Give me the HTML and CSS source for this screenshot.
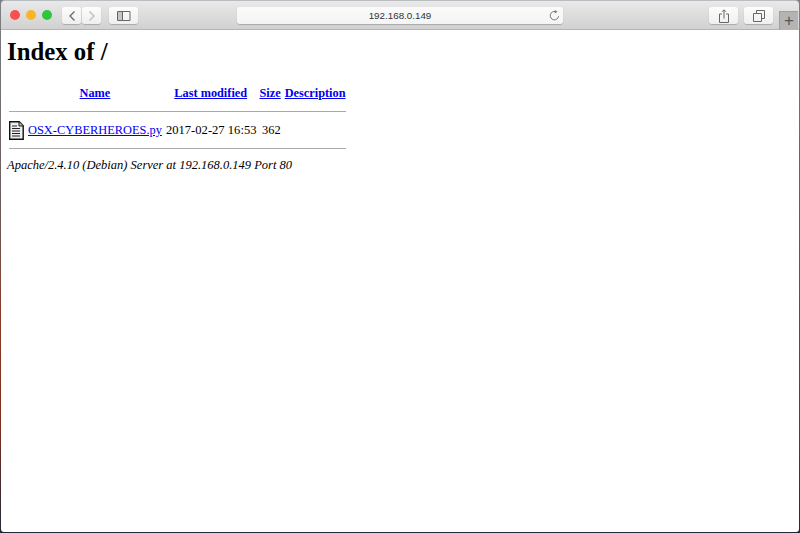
FILE: index.html
```html
<!DOCTYPE html>
<html>
<head>
    <meta charset="utf-8">
    <title>192.168.0.149</title>
    <link rel="stylesheet" href="styles.css">
</head>
<body>
    <div class="window">
        <div class="toolbar">
            <div class="lights">
                <span class="light red"></span>
                <span class="light yellow"></span>
                <span class="light green"></span>
            </div>
            <div class="nav-buttons">
                <div class="tool-button nav">
                    <svg width="10" height="14" viewBox="0 0 10 14"><path d="M7.500 2.500 3 7l4.500 4.500" fill="none" stroke="#666" stroke-width="1.3"/></svg>
                </div>
                <div class="tool-button nav">
                    <svg width="10" height="14" viewBox="0 0 10 14"><path d="M2.500 2.500 7 7l-4.500 4.500" fill="none" stroke="#bbb" stroke-width="1.3"/></svg>
                </div>
            </div>
            <div class="tool-button wide sidebar-button">
                <svg width="14" height="10" viewBox="0 0 14 10"><path d="M.5.5h12.5v9H.5zM5.500.5v9" fill="none" stroke="#666"/><path d="M1 1h4v8H1z" fill="#c4c4c4"/></svg>
            </div>
            <div class="address">
                <span class="address-text">192.168.0.149</span>
                <svg class="reload" width="11" height="11" viewBox="0 0 11 11"><path d="M9.6 6.2A4.2 4.2 0 1 1 6.6 1.6" fill="none" stroke="#777"/><path d="M5.8 0 8.6 1.8 5.8 3.6z" fill="#777"/></svg>
            </div>
            <div class="tool-button wide share-button">
                <svg width="10" height="14" viewBox="0 0 10 14"><path d="M3 5H.5v8.500h9V5H7M5 9.500V1M3 2.800 5 .8l2 2" fill="none" stroke="#666"/></svg>
            </div>
            <div class="tool-button wide tabs-button">
                <svg width="12" height="12" viewBox="0 0 12 12"><path d="M3.500 3V.5h8v8H9M.5 3.500h8v8h-8z" fill="none" stroke="#666"/></svg>
            </div>
            <div class="new-tab">+</div>
        </div>
        <div class="page">
            <h1>Index of /</h1>
            <table>
                <tr>
                    <th class="icon-col"></th>
                    <th><a href="#">Name</a></th>
                    <th><a href="#">Last modified</a></th>
                    <th><a href="#">Size</a></th>
                    <th><a href="#">Description</a></th>
                </tr>
                <tr><th class="rule" colspan="5"><hr></th></tr>
                <tr>
                    <td class="icon-col">
                        <svg class="file-icon" width="15" height="19" viewBox="0 0 15 19">
                            <path d="M.7.7h9.500l4 4v13.600H.7z" fill="#eee" stroke="#111" stroke-width="1.400"/>
                            <path d="M10 1v4h4" fill="#ccc" stroke="#111"/>
                            <path d="M3 5h5M3 7.500h8M3 10h8M3 12.500h8M3 15h8" stroke="#222" stroke-width="1.200"/>
                        </svg>
                    </td>
                    <td><a href="#">OSX-CYBERHEROES.py</a></td>
                    <td class="date">2017-02-27 16:53</td>
                    <td class="size">362</td>
                    <td></td>
                </tr>
                <tr><th class="rule" colspan="5"><hr class="last"></th></tr>
            </table>
            <address>Apache/2.4.10 (Debian) Server at 192.168.0.149 Port 80</address>
        </div>
    </div>
</body>
</html>
```

FILE: styles.css
```css
html, body {
    height: 100%;
}
body {
    margin: 0;
    background: linear-gradient(#7d7f86 0%, #6a5a58 40%, #8a3a28 60%, #7a3020 80%, #22283a 100%);
}
.window {
    height: 533px;
    box-sizing: border-box;
    margin: 0 1px;
    padding-bottom: 1px;
    display: flex;
    flex-direction: column;
}
.toolbar {
    height: 30px;
    flex: none;
    box-sizing: border-box;
    padding: 6px 0 0 9px;
    display: flex;
    align-items: flex-start;
    background: linear-gradient(#e9e9e9, #d1d1d1);
    border-top: 1px solid #b9bcc0;
    border-bottom: 1px solid #b4b4b4;
    border-radius: 4px 4px 0 0;
}
.lights {
    display: flex;
    gap: 6px;
    margin-top: 3px;
}
.light {
    width: 10px;
    height: 10px;
    border-radius: 50%;
}
.red { background: #f9514e; }
.yellow { background: #fbb429; }
.green { background: #30c53e; }
.tool-button {
    height: 17px;
    box-sizing: border-box;
    display: flex;
    align-items: center;
    justify-content: center;
    background: linear-gradient(#fdfdfd, #efefef);
    border-radius: 3px;
    box-shadow: 0 1px 1px rgba(0, 0, 0, 0.2);
}
.nav-buttons {
    display: flex;
    gap: 1px;
    margin-left: 10px;
}
.nav {
    width: 19px;
}
.wide {
    width: 29px;
}
.sidebar-button {
    margin-left: 8px;
}
.address {
    width: 326px;
    height: 17px;
    margin-left: 99px;
    position: relative;
    display: flex;
    align-items: center;
    justify-content: center;
    background: linear-gradient(#fbfbfb, #f4f4f4);
    border-radius: 3px;
    box-shadow: 0 1px 1px rgba(0, 0, 0, 0.2);
}
.address-text {
    font: 9.800px "Liberation Sans", sans-serif;
    color: #333;
}
.reload {
    position: absolute;
    right: 3px;
    top: 3px;
}
.share-button {
    margin-left: 146px;
}
.tabs-button {
    margin-left: 6px;
}
.new-tab {
    width: 19px;
    height: 19px;
    margin: 4px 0 0 6px;
    box-sizing: border-box;
    background: #b4b4b4;
    border-left: 1px solid #a0a0a0;
    border-top: 1px solid #a0a0a0;
    color: #555;
    font: 17px/17px "Liberation Sans", sans-serif;
    text-align: center;
}
.page {
    flex: 1;
    padding: 8px 6px 0;
    background: #fff;
    color: #000;
    font: 12.500px "Liberation Serif", serif;
    border-radius: 0 0 3px 3px;
}
h1 {
    margin: 0 0 17px;
    font-size: 24.800px;
    line-height: 28px;
}
table {
    border-spacing: 2px;
}
th, td {
    padding: 1px;
}
th {
    font-size: 12.300px;
}
td {
    font-size: 12.400px;
}
td.date {
    padding-right: 0;
    font-size: 12.600px;
}
.rule {
    padding: 0;
}
hr {
    margin: 7px 0;
    border: 0;
    border-top: 1px solid #aaa;
}
hr.last {
    margin: 6px 0;
}
a {
    color: #0000ee;
}
.icon-col {
    width: 16px;
    padding: 0;
}
.file-icon {
    display: block;
}
.size {
    text-align: right;
}
address {
    margin-top: 1px;
}
```
